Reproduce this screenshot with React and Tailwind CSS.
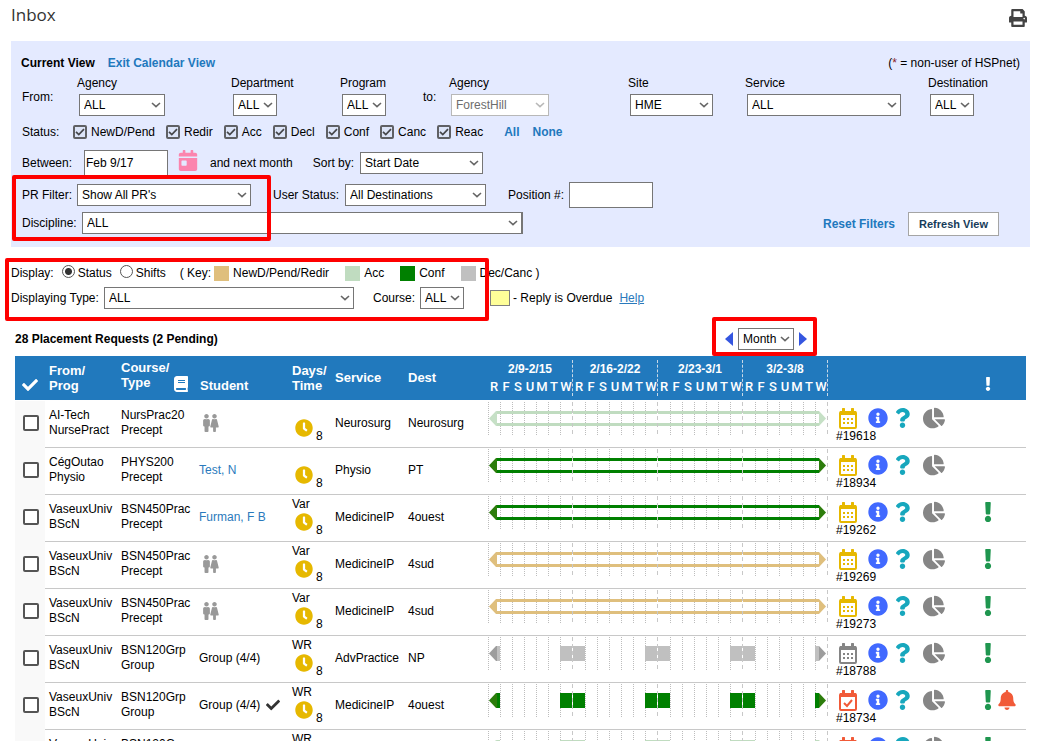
import React, { useState } from 'react';
import {
  FaBell,
  FaBook,
  FaCalendarDay,
  FaChartPie,
  FaCheck,
  FaClock,
  FaExclamation,
  FaFemale,
  FaInfoCircle,
  FaMale,
  FaPrint,
  FaQuestion,
} from 'react-icons/fa';

const COLORS = {
  pending: { bar: '#dfbf7d', arrow: '#dfbf7d' },
  accepted: { bar: '#c0dcc0', arrow: '#c6e0c6' },
  confirmed: { bar: '#008000', arrow: '#2d7d0c' },
  declined: { bar: '#c0c0c0', arrow: '#9d9d9d' },
};

const WEEKS = ['2/9-2/15', '2/16-2/22', '2/23-3/1', '3/2-3/8'];
const DAYS = ['R', 'F', 'S', 'U', 'M', 'T', 'W'];
const STATUSES = ['NewD/Pend', 'Redir', 'Acc', 'Decl', 'Conf', 'Canc', 'Reac'];

const ROWS = [
  { id: '19618', from: 'AI-Tech', prog: 'NursePract', course: 'NursPrac20', type: 'Precept', days: '', service: 'Neurosurg', dest: 'Neurosurg', status: 'accepted', calendar: 'yellow' },
  { id: '18934', from: 'CégOutao', prog: 'Physio', course: 'PHYS200', type: 'Precept', student: 'Test, N', days: '', service: 'Physio', dest: 'PT', status: 'confirmed', calendar: 'yellow' },
  { id: '19262', from: 'VaseuxUniv', prog: 'BScN', course: 'BSN450Prac', type: 'Precept', student: 'Furman, F B', days: 'Var', service: 'MedicineIP', dest: '4ouest', status: 'confirmed', calendar: 'yellow', alert: true },
  { id: '19269', from: 'VaseuxUniv', prog: 'BScN', course: 'BSN450Prac', type: 'Precept', days: 'Var', service: 'MedicineIP', dest: '4sud', status: 'pending', calendar: 'yellow', alert: true },
  { id: '19273', from: 'VaseuxUniv', prog: 'BScN', course: 'BSN450Prac', type: 'Precept', days: 'Var', service: 'MedicineIP', dest: '4sud', status: 'pending', calendar: 'yellow', alert: true },
  { id: '18788', from: 'VaseuxUniv', prog: 'BScN', course: 'BSN120Grp', type: 'Group', group: 'Group (4/4)', days: 'WR', service: 'AdvPractice', dest: 'NP', status: 'declined', calendar: 'grey', alert: true, blocks: true },
  { id: '18734', from: 'VaseuxUniv', prog: 'BScN', course: 'BSN120Grp', type: 'Group', group: 'Group (4/4)', groupDone: true, days: 'WR', service: 'MedicineIP', dest: '4ouest', status: 'confirmed', calendar: 'check', alert: true, bell: true, blocks: true },
  { id: '18735', from: 'VaseuxUniv', prog: 'BScN', course: 'BSN120Grp', type: 'Group', group: 'Group (4/4)', days: 'WR', service: 'MedicineIP', dest: '4ouest', status: 'accepted', calendar: 'check', alert: true, blocks: true },
];

const Select = ({ id, label, value, width, disabled }) => (
  <span className={`inline-grid shrink-0 items-center ${width}`}>
    <select
      id={id}
      aria-label={label}
      disabled={disabled}
      className="col-start-1 row-start-1 h-[22px] w-full appearance-none border border-[#767676] bg-white pl-1 text-black disabled:border-[#b8b8b8] disabled:text-[#6d6d6d]"
    >
      <option>{value}</option>
    </select>
    <svg
      viewBox="0 0 10 6"
      className={`pointer-events-none col-start-1 row-start-1 mr-1 h-1.5 w-2.5 justify-self-end ${disabled ? 'text-[#b8b8b8]' : 'text-[#666]'}`}
    >
      <path d="M1 1l4 3.6L9 1" fill="none" stroke="currentColor" strokeWidth="1.6" />
    </svg>
  </span>
);

const Field = ({ id, label, value, width, disabled }) => (
  <div className="flex flex-col items-start">
    <label htmlFor={id} className="h-[18px]">{label}</label>
    <div className="pl-0.5">
      <Select id={id} value={value} width={width} disabled={disabled} />
    </div>
  </div>
);

const StatusCheck = ({ label }) => (
  <label className="flex items-center gap-1">
    <span className="inline-grid place-items-center">
      <input
        type="checkbox"
        defaultChecked
        className="peer col-start-1 row-start-1 size-3.5 appearance-none rounded-xs border-2 border-[#5f6064] bg-[#dce4f8]"
      />
      <svg viewBox="0 0 10 8" className="pointer-events-none invisible col-start-1 row-start-1 h-2 w-2.5 peer-checked:visible">
        <path d="M1 3.8l2.8 2.8L9 1.2" fill="none" stroke="#45464a" strokeWidth="1.7" />
      </svg>
    </span>
    {label}
  </label>
);

const Highlight = ({ className }) => (
  <div className={`pointer-events-none absolute rounded-xs border-4 border-[#fe0000] ${className}`} />
);

const Timeline = ({ status, blocks }) => {
  const { bar, arrow } = COLORS[status];

  return (
    <svg width="340" height="34" viewBox="0 0 340 34" className="block">
      {WEEKS.map((week, w) => (
        <g key={week} stroke="#bdbdbd" strokeDasharray="1 1">
          {DAYS.map((day, d) =>
            w > 0 && d === 0 ? null : (
              <line key={day} x1={w * 85 + d * 12 + 0.5} x2={w * 85 + d * 12 + 0.5} y1="0" y2="34" />
            )
          )}
        </g>
      ))}
      {blocks ? (
        <g fill={bar}>
          <rect x="8" y="9" width="4" height="15" />
          {[72, 157, 242].map((x) => (
            <rect key={x} x={x} y="9" width="25" height="15" />
          ))}
          <rect x="327" y="9" width="4" height="15" />
        </g>
      ) : (
        <g fill={bar}>
          <rect x="8" y="9" width="323" height="3" />
          <rect x="8" y="21" width="323" height="3" />
        </g>
      )}
      {WEEKS.map((week, w) => (
        <g key={week}>
          <line x1={w * 85 + 84.5} x2={w * 85 + 84.5} y1="0" y2="34" stroke="#fff" />
          <line x1={w * 85 + 84.5} x2={w * 85 + 84.5} y1="0" y2="34" stroke="#c8c8c8" strokeDasharray="4 3" />
        </g>
      ))}
      <path d="M1 16.5L8 9h1v15H8z" fill={arrow} />
      <path d="M338 16.5L331 9v15z" fill={arrow} />
    </svg>
  );
};

const CALENDAR_TEXT = {
  yellow: 'text-[#e6b800]',
  grey: 'text-[#858585]',
  check: 'text-[#f15a38]',
};

const CalendarIcon = ({ type }) => (
  <svg viewBox="0 0 18 21" className={`ml-px h-[21px] w-[18px] ${CALENDAR_TEXT[type]}`} fill="currentColor">
    <rect x="3" y="0" width="3" height="5" rx="0.5" />
    <rect x="12" y="0" width="3" height="5" rx="0.5" />
    <rect x="1" y="4" width="16" height="16" rx="1" fill="none" stroke="currentColor" strokeWidth="2" />
    <rect x="1" y="3" width="16" height="4" />
    {type === 'check' ? (
      <path d="M5 13l3 3 5-6" fill="none" stroke="currentColor" strokeWidth="2" />
    ) : (
      [10, 14].map((y) =>
        [4, 8, 12].map((x) => <rect key={`${x}-${y}`} x={x} y={y} width="2" height="2" />)
      )
    )}
  </svg>
);

const Student = ({ row }) => {
  if (row.student) return <a href="#student" className="text-[#2a7abc]">{row.student}</a>;
  if (row.group) {
    return (
      <span className="flex items-center gap-1.5">
        {row.groupDone ? (
          <>
            {row.group} <FaCheck className="size-3.5 text-[#333]" />
          </>
        ) : (
          row.group
        )}
      </span>
    );
  }
  return (
    <span className="flex pl-1 text-[#999]">
      <FaMale className="h-[18px] w-[7px]" />
      <FaFemale className="h-[18px] w-[9px]" />
    </span>
  );
};

const RequestRow = ({ row }) => (
  <tr className="h-[47px]">
    <td className="bg-[#f9f9f9] pb-1 pl-2">
      <input
        type="checkbox"
        aria-label={`Select request ${row.id}`}
        className="block size-4 appearance-none rounded-xs border-2 border-[#555] bg-white"
      />
    </td>
    <td className="border-b border-[#c8c8c8] pb-0.5 pl-1">
      {row.from}
      <br />
      {row.prog}
    </td>
    <td className="border-b border-[#c8c8c8] pb-0.5 pl-1">
      {row.course}
      <br />
      {row.type}
    </td>
    <td className="border-b border-[#c8c8c8] pb-0.5 pl-0.5">
      <Student row={row} />
    </td>
    <td className="border-b border-[#c8c8c8] pt-0.5 pl-1 align-top">
      <div className="h-4">{row.days}</div>
      <div className="flex pl-[3px]">
        <FaClock className="size-[18px] text-[#e6b800]" />
        <span className="pt-2.5 pl-[3px]">8</span>
      </div>
    </td>
    <td className="border-b border-[#c8c8c8] pb-0.5 pl-1">{row.service}</td>
    <td className="border-b border-[#c8c8c8] pb-0.5 pl-1">{row.dest}</td>
    <td className="border-b border-[#c8c8c8] pt-px align-top">
      <Timeline status={row.status} blocks={row.blocks} />
    </td>
    <td className="border-b border-[#c8c8c8] pt-1.5 pl-2 align-top">
      <div className="flex items-center pl-0.5">
        <CalendarIcon type={row.calendar} />
        <FaInfoCircle className="ml-[11px] size-5 text-[#4169ff]" />
        <FaQuestion className="ml-1.5 h-5 w-[17px] text-[#17a7bd]" />
        <FaChartPie className="ml-3 size-[22px] text-[#868686]" />
      </div>
      #{row.id}
    </td>
    <td className="border-b border-[#c8c8c8] pt-1.5 pl-1.5 align-top">
      <div className="flex h-[21px] items-center">
        {row.alert && <FaExclamation className="h-5 w-4 text-[#1f964f]" />}
        {row.bell && <FaBell className="ml-0.5 h-5 w-[18px] text-[#f15a38]" />}
      </div>
    </td>
  </tr>
);

const Filters = () => (
  <form className="relative bg-[#e4eaff] px-2.5 pt-3.5 pb-[11px]" onSubmit={(e) => e.preventDefault()}>
    <div className="flex h-4 items-center">
      <h2 className="font-bold">Current View</h2>
      <a href="#exit" className="ml-[13px] font-bold text-[#2178bd]">Exit Calendar View</a>
      <span className="ml-auto">(<span className="text-[#8a1f1f]">*</span> = non-user of HSPnet)</span>
    </div>
    <div className="mt-[5px] grid h-[42px] grid-cols-[56fr_154fr_109fr_83fr_26fr_179fr_117fr_183fr_92fr]">
      <span className="pt-3.5 pl-px">From:</span>
      <Field id="from-agency" label="Agency" value="ALL" width="w-[86px]" />
      <Field id="department" label="Department" value="ALL" width="w-11" />
      <Field id="program" label="Program" value="ALL" width="w-11" />
      <span className="pt-3.5">to:</span>
      <Field id="to-agency" label="Agency" value="ForestHill" width="w-[98px]" disabled />
      <Field id="site" label="Site" value="HME" width="w-[83px]" />
      <Field id="service" label="Service" value="ALL" width="w-[154px]" />
      <Field id="destination" label="Destination" value="ALL" width="w-11" />
    </div>
    <div className="mt-0.5 flex h-6 items-center gap-[11px]">
      <span className="w-[41px] pl-px">Status:</span>
      {STATUSES.map((status) => (
        <StatusCheck key={status} label={status} />
      ))}
      <button type="button" className="ml-2.5 font-bold text-[#2178bd]">All</button>
      <button type="button" className="ml-0.5 font-bold text-[#2178bd]">None</button>
    </div>
    <div className="mt-1.5 flex h-[26px] items-center">
      <label htmlFor="between" className="w-[63px] pl-px">Between:</label>
      <input id="between" type="text" defaultValue="Feb 9/17" className="h-[26px] w-[84px] border border-[#767676] bg-white px-px" />
      <FaCalendarDay className="mb-1.5 ml-2.5 h-[21px] w-5 text-[#fb84ae]" />
      <span className="ml-3">and next month</span>
      <label htmlFor="sort" className="ml-5 mr-1.5">Sort by:</label>
      <Select id="sort" value="Start Date" width="w-[123px]" />
    </div>
    <div className="mt-1.5 flex h-[26px] items-center">
      <label htmlFor="pr-filter" className="w-14 pl-px">PR Filter:</label>
      <Select id="pr-filter" value="Show All PR's" width="w-[174px]" />
      <label htmlFor="user-status" className="mr-1.5 ml-[22px]">User Status:</label>
      <Select id="user-status" value="All Destinations" width="w-[141px]" />
      <label htmlFor="position" className="mr-[5px] ml-[22px]">Position #:</label>
      <input id="position" type="text" className="h-[26px] w-[84px] border border-[#767676] bg-white px-px" />
    </div>
    <div className="mt-1 flex h-6 items-center">
      <label htmlFor="discipline" className="mb-0.5 w-[61px] pl-px">Discipline:</label>
      <div className="mb-0.5 flex border-r border-[#767676]">
        <Select id="discipline" value="ALL" width="w-[440px]" />
      </div>
      <button type="reset" className="ml-auto font-bold text-[#2178bd]">Reset Filters</button>
      <button type="submit" className="mr-[21px] ml-[13px] h-6 w-[91px] border border-[#a5a5a5] bg-white text-[11px] font-bold text-[#163c5a]">
        Refresh View
      </button>
    </div>
    <Highlight className="top-[134px] left-px h-[66px] w-[259px]" />
  </form>
);

const Radio = ({ name, label, checked, onChange }) => (
  <label className="flex items-center gap-[3px]">
    <input
      type="radio"
      name={name}
      checked={checked}
      onChange={onChange}
      className="mb-1 size-[13px] appearance-none rounded-full border border-[#555] bg-white checked:bg-[radial-gradient(#333_0_3px,white_4px)]"
    />
    {label}
  </label>
);

const DisplayOptions = () => {
  const [mode, setMode] = useState('Status');

  return (
    <div className="relative mt-4 h-[58px] pt-px">
      <div className="flex h-[18px] items-center">
        <span className="mr-2">Display:</span>
        <Radio name="display" label="Status" checked={mode === 'Status'} onChange={() => setMode('Status')} />
        <span className="w-2" />
        <Radio name="display" label="Shifts" checked={mode === 'Shifts'} onChange={() => setMode('Shifts')} />
        <span className="ml-3.5">( Key:</span>
        <span className="mr-1 ml-[3px] size-[15px] bg-[#dfbf7d]" />
        NewD/Pend/Redir
        <span className="mr-1 ml-4 size-[15px] bg-[#c0dcc0]" />
        Acc
        <span className="mr-1 ml-4 size-[15px] bg-[#008000]" />
        Conf
        <span className="mr-1 ml-4 size-[15px] bg-[#c0c0c0]" />
        Dec/Canc )
      </div>
      <div className="mt-[5px] flex h-[22px] items-center">
        <label htmlFor="display-type" className="w-[93px]">Displaying Type:</label>
        <Select id="display-type" value="ALL" width="w-[250px]" />
        <label htmlFor="course" className="mr-[5px] ml-[19px]">Course:</label>
        <Select id="course" value="ALL" width="w-11" />
        <span className="ml-[26px] mr-[3px] h-4 w-5 border border-[#808080] bg-[#ffff99]" />
        - Reply is Overdue
        <a href="#help" className="ml-[7px] text-[#2a7abc] underline">Help</a>
      </div>
      <Highlight className="-top-[5px] -left-1.5 h-[63px] w-[484px]" />
    </div>
  );
};

const Requests = () => (
  <section className="px-1">
    <div className="mt-px flex h-[34px] items-center">
      <h2 className="flex-1 font-bold">28 Placement Requests (2 Pending)</h2>
      <div className="relative mr-[219px] flex items-center gap-[5px]">
        <button type="button" aria-label="Previous" className="flex">
          <svg viewBox="0 0 8 14" className="h-3.5 w-2"><path d="M8 0v14L0 7z" fill="#3556e0" /></svg>
        </button>
        <Select label="Period" value="Month" width="w-14" />
        <button type="button" aria-label="Next" className="flex">
          <svg viewBox="0 0 8 14" className="h-3.5 w-2"><path d="M0 0v14l8-7z" fill="#3556e0" /></svg>
        </button>
        <Highlight className="-top-[11px] -left-[13px] h-[39px] w-[105px]" />
      </div>
    </div>
    <table className="w-full table-fixed border-separate border-spacing-0 text-left whitespace-nowrap">
      <colgroup>
        <col className="w-[30px]" />
        <col className="w-[72px]" />
        <col className="w-[80px]" />
        <col className="w-[91px]" />
        <col className="w-[43px]" />
        <col className="w-[73px]" />
        <col className="w-[84px]" />
        <col className="w-[340px]" />
        <col className="w-[146px]" />
        <col />
      </colgroup>
      <thead className="text-[13px] text-white">
        <tr className="h-[45px] [&>th]:border-b [&>th]:border-white [&>th]:bg-[#2179bd]">
          <th className="pt-[13px] pl-[7px]"><FaCheck className="size-4" aria-label="Select" /></th>
          <th className="pl-1">From/<br />Prog</th>
          <th className="pl-1">
            <div className="flex items-end">
              <span className="w-[53px] pb-1.5">Course/<br />Type</span>
              <FaBook className="mb-1 h-4 w-3.5" />
            </div>
          </th>
          <th className="pt-[15px] pl-[3px]">Student</th>
          <th className="pl-1">Days/<br />Time</th>
          <th className="pb-0.5 pl-1">Service</th>
          <th className="pb-0.5 pl-1">Dest</th>
          <th className="pt-1 align-top text-xs">
            <div className="flex">
              {WEEKS.map((week) => (
                <div key={week} className="h-9 w-[85px] border-r border-dashed border-[#c8d8e6] text-center">
                  <div className="h-[18px] leading-[18px]">{week}</div>
                  <div className="grid grid-cols-7 font-[Roboto,sans-serif] text-[13px] leading-[18px] font-medium">
                    {DAYS.map((day) => (
                      <span key={day}>{day}</span>
                    ))}
                  </div>
                </div>
              ))}
            </div>
          </th>
          <th />
          <th className="pt-3 pl-1.5"><FaExclamation className="h-3.5 w-4" aria-label="Alert" /></th>
        </tr>
      </thead>
      <tbody>
        {ROWS.map((row) => (
          <RequestRow key={row.id} row={row} />
        ))}
      </tbody>
    </table>
  </section>
);

const App = () => (
  <main className="h-screen overflow-hidden bg-white pr-3.5 pl-[11px] font-['Liberation_Sans',Arial,sans-serif] text-xs leading-[15px] text-black">
    <header className="flex h-[41px] items-start justify-between">
      <h1 className="pt-[3px] font-['Open_Sans',sans-serif] text-[17px] leading-6 text-[#333]">Inbox</h1>
      <button type="button" aria-label="Print" className="mt-[9px] mr-[3px]">
        <FaPrint className="size-[18px] text-[#444]" />
      </button>
    </header>
    <Filters />
    <DisplayOptions />
    <Requests />
  </main>
);

export default App;
